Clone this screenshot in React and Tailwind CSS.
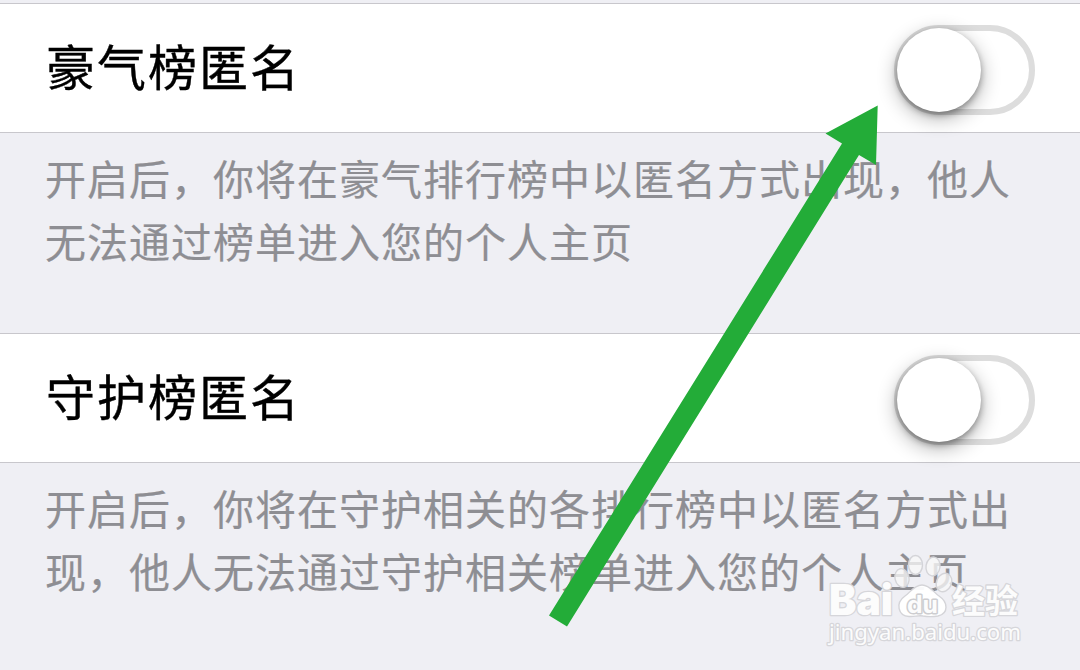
import React, { useState } from 'react'

const SETTINGS = [
  {
    id: 'rich',
    title: '豪气榜匿名',
    lines: ['开启后，你将在豪气排行榜中以匿名方式出现，他人', '无法通过榜单进入您的个人主页'],
  },
  {
    id: 'guard',
    title: '守护榜匿名',
    lines: ['开启后，你将在守护相关的各排行榜中以匿名方式出', '现，他人无法通过守护相关榜单进入您的个人主页'],
  },
]

function Toggle({ label }) {
  const [on, setOn] = useState(false)

  return (
    <button
      role="switch"
      aria-checked={on}
      aria-label={label}
      onClick={() => setOn(!on)}
      className={`flex items-center w-[141px] h-[90px] mt-1 rounded-full border-[6px] ${
        on ? 'justify-end border-[#4cd964] bg-[#4cd964]' : 'justify-start border-[#dddddd] bg-white'
      }`}
    >
      <span className="shrink-0 -mx-[3px] size-[84px] rounded-full bg-white shadow-[0_3px_6px_rgba(0,0,0,0.32),0_6px_20px_rgba(0,0,0,0.32)]" />
    </button>
  )
}

function SettingSection({ title, lines }) {
  return (
    <section className="h-[330px]">
      <div className="flex items-center justify-between h-[130px] pl-[46px] pr-[45px] bg-white border-y border-[#c8c7cc]">
        <h2 className="pb-[7px] text-[49px] leading-[70px] tracking-[2px] text-black [-webkit-text-stroke:0.4px_black]">{title}</h2>
        <Toggle label={title} />
      </div>
      <p className="pt-[13px] pl-[45px] text-[41px] leading-[63px] tracking-[1px] text-[#8e8e93] whitespace-nowrap [-webkit-text-stroke:0.2px_#8e8e93]">
        {lines.map((line) => (
          <span key={line} className="block">{line}</span>
        ))}
      </p>
    </section>
  )
}

function Arrow() {
  return (
    <svg className="absolute inset-0 pointer-events-none" width="1080" height="670" viewBox="0 0 1080 670">
      <path d="M877.7 105.5 L825.5 133.5 L842 143.5 L549 615.5 L567 626.5 L859 155 L876 165 Z" fill="#23ac38" />
    </svg>
  )
}

function Watermark() {
  return (
    <svg
      className="absolute left-[820px] top-[545px] pointer-events-none"
      width="220"
      height="110"
      viewBox="0 0 220 110"
    >
      <g fill="#f7f7f7" fillOpacity="0.78" stroke="#d4d4d8" strokeWidth="1.4" strokeLinejoin="round">
        {/* Paw */}
        <ellipse cx="82" cy="33" rx="7" ry="9.5" transform="rotate(-12 82 33)" />
        <ellipse cx="95.5" cy="20" rx="7" ry="9.5" />
        <ellipse cx="113" cy="21.5" rx="7" ry="9.5" transform="rotate(8 113 21.5)" />
        <ellipse cx="124" cy="37.5" rx="7.5" ry="9.5" transform="rotate(25 124 37.5)" />
        <path d="M102 40 C94 40 91 47 85 51 C75 58 78 71 89 71.5 C95 72 98 70 103 71 C109 72 112 72 118 71 C129 68 128 57 119 51 C113 47 110 40 102 40 Z" fill="#ffffff" fillOpacity="0.95" />
      </g>
      <g fill="#fcfcfc" stroke="#d6d6da" strokeWidth="2.6" strokeLinejoin="round" paintOrder="stroke">
        <text x="9" y="69.5" fontFamily="Inter" fontWeight="900" fontSize="42" textLength="64" lengthAdjust="spacingAndGlyphs">Bai</text>
        <text x="132" y="68" fontFamily="Noto Sans CJK SC" fontWeight="700" fontSize="33" textLength="66" lengthAdjust="spacingAndGlyphs">经验</text>
        <text x="9" y="95" fontFamily="Noto Sans" fontSize="22" textLength="192" lengthAdjust="spacingAndGlyphs">jingyan.baidu.com</text>
        <text x="87" y="68" fontFamily="Inter" fontWeight="700" fontSize="24" textLength="31" lengthAdjust="spacingAndGlyphs" stroke="#cdcdd0" strokeWidth="3">du</text>
      </g>
    </svg>
  )
}

export default function App() {
  return (
    <main className="relative w-[1080px] h-[670px] overflow-hidden bg-[#efeff4] pt-[3px] font-['Noto_Sans_CJK_SC',sans-serif]">
      {SETTINGS.map((item) => (
        <SettingSection key={item.id} title={item.title} lines={item.lines} />
      ))}
      <Watermark />
      <Arrow />
    </main>
  )
}
